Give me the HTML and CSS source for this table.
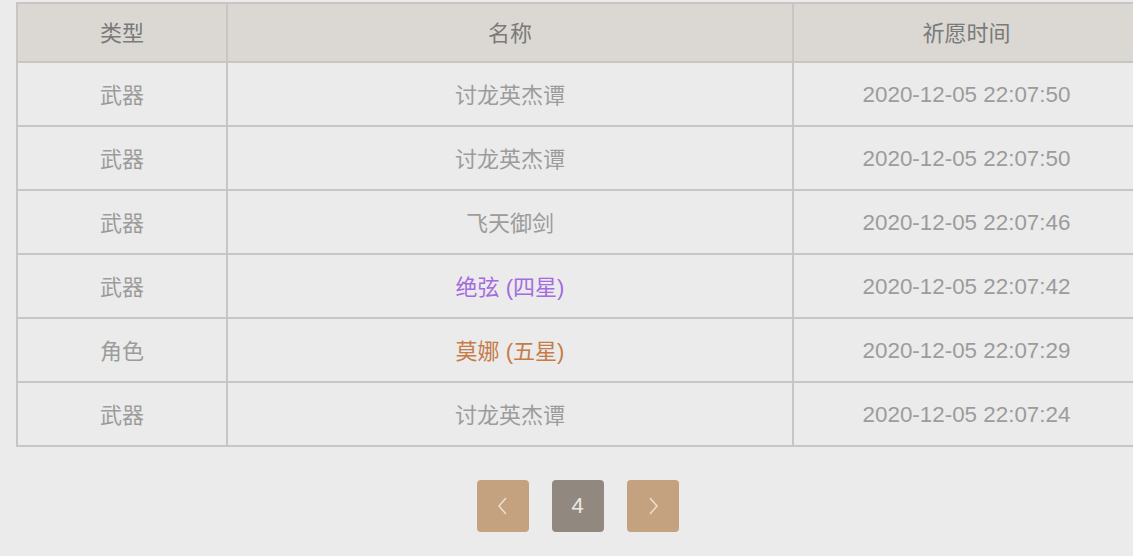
FILE: index.html
```html
<!DOCTYPE html>
<html lang="zh">
<head>
<meta charset="utf-8">
<title>祈愿记录</title>
<link rel="stylesheet" href="styles.css">
</head>
<body>
<div class="page">
  <table class="log">
    <colgroup>
      <col class="c-type">
      <col class="c-name">
      <col class="c-time">
    </colgroup>
    <thead>
      <tr><th>类型</th><th>名称</th><th>祈愿时间</th></tr>
    </thead>
    <tbody>
      <tr><td>武器</td><td>讨龙英杰谭</td><td class="time">2020-12-05 22:07:50</td></tr>
      <tr><td>武器</td><td>讨龙英杰谭</td><td class="time">2020-12-05 22:07:50</td></tr>
      <tr><td>武器</td><td>飞天御剑</td><td class="time">2020-12-05 22:07:46</td></tr>
      <tr><td>武器</td><td class="r4">绝弦 (四星)</td><td class="time">2020-12-05 22:07:42</td></tr>
      <tr><td>角色</td><td class="r5">莫娜 (五星)</td><td class="time">2020-12-05 22:07:29</td></tr>
      <tr><td>武器</td><td>讨龙英杰谭</td><td class="time">2020-12-05 22:07:24</td></tr>
    </tbody>
  </table>
  <div class="pager">
    <button class="pbtn nav" aria-label="上一页">
      <svg width="14" height="20" viewBox="0 0 14 20"><path d="M10 2 L3 10 L10 18" fill="none" stroke="#ecdfcf" stroke-width="1.5"/></svg>
    </button>
    <button class="pbtn cur">4</button>
    <button class="pbtn nav" aria-label="下一页">
      <svg width="14" height="20" viewBox="0 0 14 20"><path d="M4 2 L11 10 L4 18" fill="none" stroke="#ecdfcf" stroke-width="1.5"/></svg>
    </button>
  </div>
</div>
</body>
</html>
```
FILE: styles.css
```css
html, body {
  margin: 0;
  padding: 0;
  background: #ebebeb;
  overflow: hidden;
}
body {
  font-family: "Liberation Sans", "Noto Sans CJK SC", sans-serif;
}
.page {
  width: 1123px;
  padding: 2px 0 0 16px;
}
.log {
  width: 1123px;
  border-collapse: collapse;
  table-layout: fixed;
  border: 2px solid #c8c6c2;
}
.c-type { width: 210px; }
.c-name { width: 566px; }
.c-time { width: 347px; }
.log th, .log td {
  border: 2px solid #c8c6c2;
  text-align: center;
  font-size: 22px;
  font-weight: normal;
  padding: 0;
}
.log th {
  background: #dbd8d3;
  color: #7a7a7a;
  height: 54px;
  padding-bottom: 3px;
}
.log td {
  background: #ebebeb;
  color: #9c9c9c;
  height: 60px;
  padding-bottom: 2px;
}
.log td.time {
  font-size: 22.4px;
  height: 61px;
  padding-bottom: 0;
  padding-top: 1px;
}
.log td.r4 { color: #a56ce0; }
.log td.r5 { color: #c67b48; }
.pager {
  display: flex;
  justify-content: center;
  gap: 23px;
  margin-top: 33px;
}
.pbtn {
  width: 52px;
  height: 52px;
  border: none;
  border-radius: 4px;
  display: flex;
  align-items: center;
  justify-content: center;
  padding: 0;
  font-family: "Liberation Sans", sans-serif;
  font-size: 22px;
  color: #ece8e2;
}
.pbtn.nav { background: #c4a280; }
.pbtn.cur { background: #918880; }
```
